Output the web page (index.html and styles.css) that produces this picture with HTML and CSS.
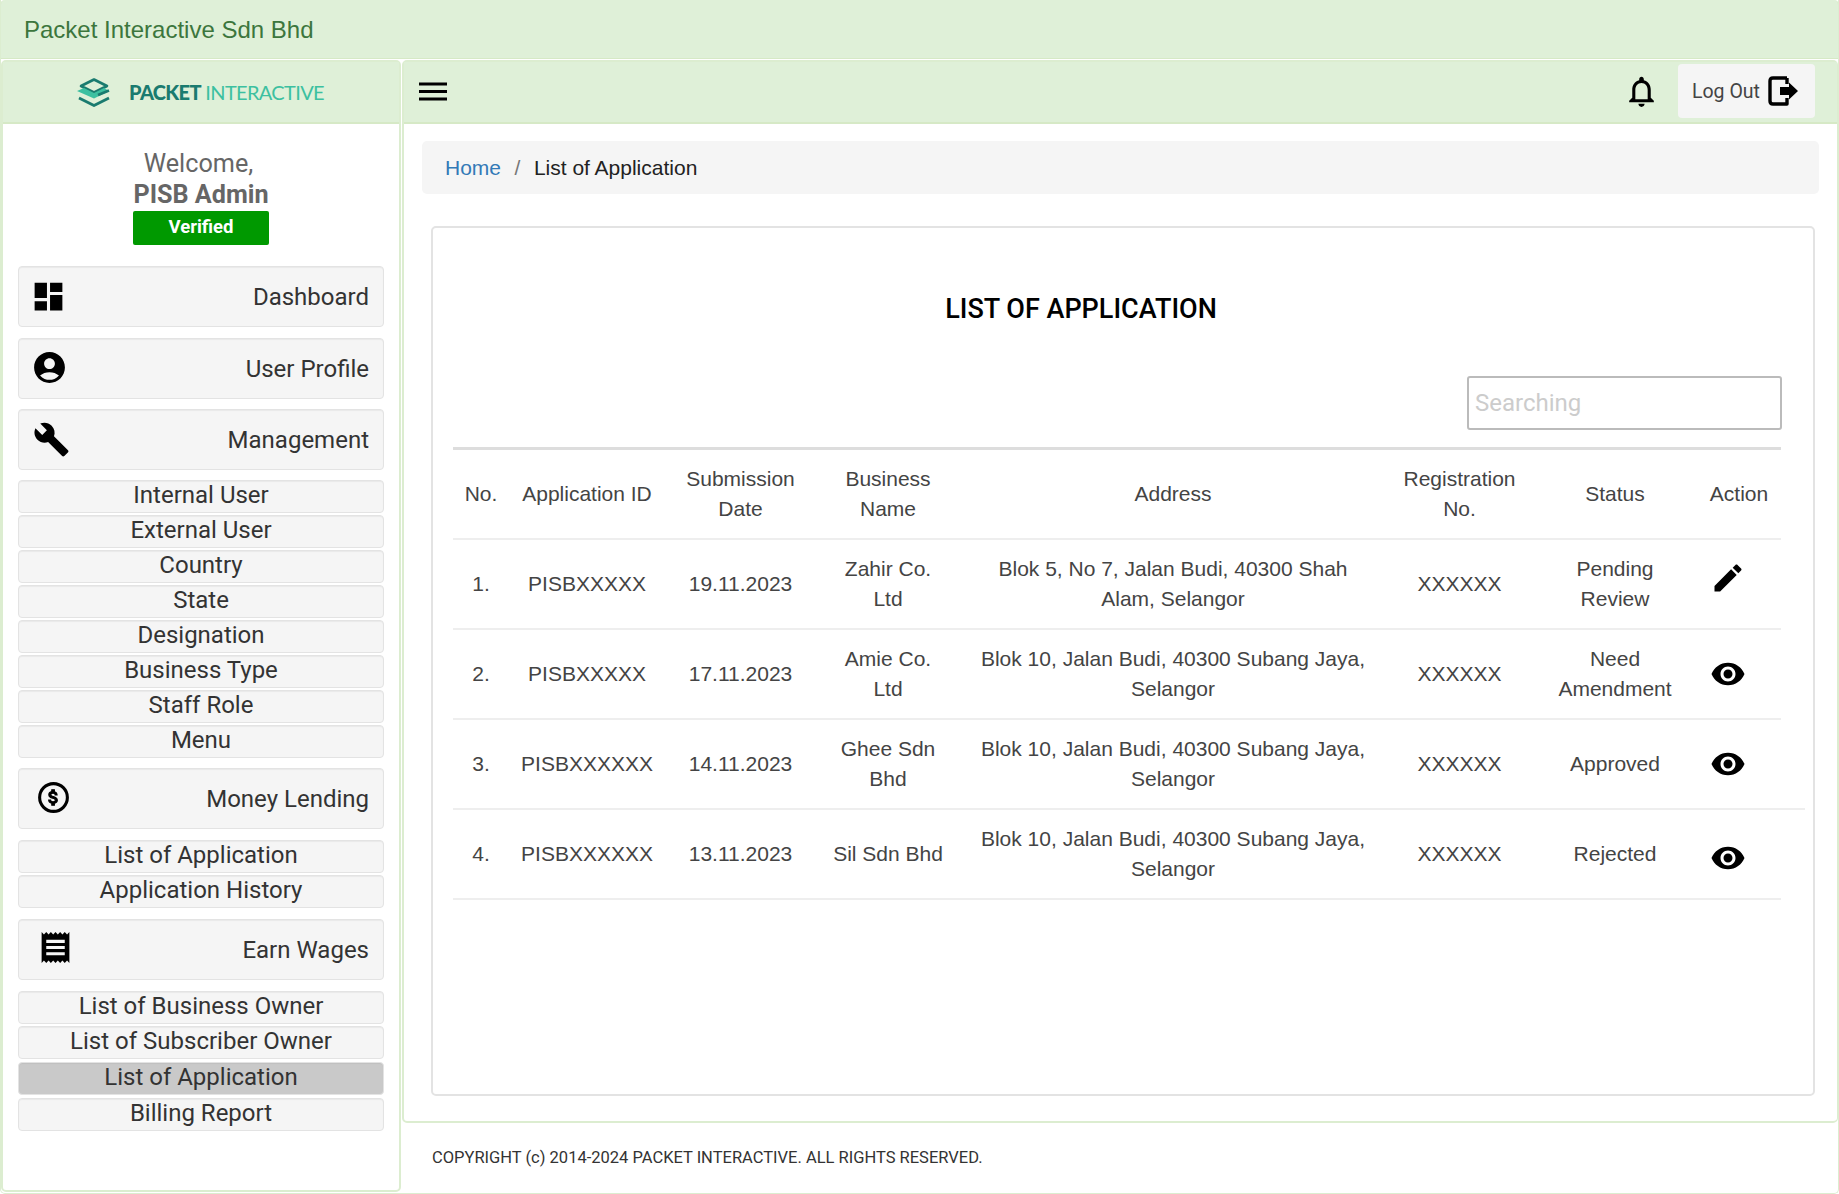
FILE: index.html
```html
<!DOCTYPE html>
<html lang="en">

<head>
  <meta charset="UTF-8">
  <meta name="viewport" content="width=device-width, initial-scale=1.0">
  <title>List of Application</title>
  <link rel="stylesheet" href="styles.css">
</head>

<body>
  <header class="topbar">Packet Interactive Sdn Bhd</header>

  <div class="layout">
    <aside class="sidebar">
      <div class="logo">
        <svg class="logo-mark" viewBox="0 0 36 29" width="36" height="29">
          <path d="M18 1.5 31 8 18 14.5 5 8Z" fill="none" stroke="#1a7b6f" stroke-width="2.6" stroke-linejoin="round"/>
          <path d="M1 13 8 10 18 15 28 10 33 13 18 20.5Z" fill="#3cc0a0"/>
          <path d="M3 20 18 27.5 33 20" fill="none" stroke="#1a7b6f" stroke-width="2.8"/>
          <path d="M22 17 33 12.5" fill="none" stroke="#1a7b6f" stroke-width="2.6"/>
        </svg>
        <span class="logo-text"><b>PACKET</b> INTERACTIVE</span>
      </div>

      <div class="welcome">
        <div class="welcome-label">Welcome,</div>
        <div class="welcome-name">PISB Admin</div>
        <div class="verified">Verified</div>
      </div>

      <nav class="menu">
        <a class="menu-btn" href="#">
          <svg class="icon-dashboard" viewBox="0 0 24 24"><path d="M3 13h8V3H3v10zm0 8h8v-6H3v6zm10 0h8V11h-8v10zm0-18v6h8V3h-8z"/></svg>
          Dashboard
        </a>
        <a class="menu-btn" href="#">
          <svg class="icon-user" viewBox="0 0 24 24"><path d="M12 2C6.48 2 2 6.48 2 12s4.48 10 10 10 10-4.48 10-10S17.52 2 12 2zm0 4c1.93 0 3.5 1.57 3.5 3.5S13.93 13 12 13s-3.5-1.57-3.5-3.5S10.07 6 12 6zm0 14c-2.03 0-4.43-.82-6.14-2.88C7.55 15.8 9.68 15 12 15s4.45.8 6.14 2.12C16.43 19.18 14.03 20 12 20z"/></svg>
          User Profile
        </a>
        <a class="menu-btn" href="#">
          <svg class="icon-wrench" viewBox="0 0 24 24"><path d="M22.7 19l-9.1-9.1c.9-2.3.4-5-1.5-6.9-2-2-5-2.4-7.4-1.3L9 6 6 9 1.6 4.7C.4 7.1.9 10.1 2.9 12.1c1.9 1.9 4.6 2.4 6.9 1.5l9.1 9.1c.4.4 1 .4 1.4 0l2.3-2.3c.5-.4.5-1.1.1-1.4z"/></svg>
          Management
        </a>
        <div class="submenu submenu-tight">
          <a href="#">Internal User</a>
          <a href="#">External User</a>
          <a href="#">Country</a>
          <a href="#">State</a>
          <a href="#">Designation</a>
          <a href="#">Business Type</a>
          <a href="#">Staff Role</a>
          <a href="#">Menu</a>
        </div>
        <a class="menu-btn" href="#">
          <svg class="icon-money" viewBox="0 0 24 24">
            <circle cx="12" cy="12" r="9" fill="none" stroke="#000" stroke-width="2"/>
            <path transform="translate(5.4 5.4) scale(.55)" d="M11.8 10.9c-2.27-.59-3-1.2-3-2.15 0-1.09 1.01-1.85 2.7-1.85 1.78 0 2.44.85 2.5 2.1h2.21c-.07-1.72-1.12-3.3-3.21-3.81V3h-3v2.16c-1.94.42-3.5 1.68-3.5 3.61 0 2.31 1.91 3.46 4.7 4.13 2.5.6 3 1.48 3 2.41 0 .69-.49 1.79-2.7 1.79-2.06 0-2.87-.92-2.98-2.1h-2.2c.12 2.19 1.76 3.42 3.68 3.83V21h3v-2.15c1.95-.37 3.5-1.5 3.5-3.55 0-2.84-2.43-3.81-4.7-4.4z" stroke="#000" stroke-width="1.4"/>
          </svg>
          Money Lending
        </a>
        <div class="submenu">
          <a href="#">List of Application</a>
          <a href="#">Application History</a>
        </div>
        <a class="menu-btn menu-earn" href="#">
          <svg class="icon-receipt" viewBox="0 0 24 24"><path d="M18 17H6v-2h12v2zm0-4H6v-2h12v2zm0-4H6V7h12v2zM3 22l1.5-1.5L6 22l1.5-1.5L9 22l1.5-1.5L12 22l1.5-1.5L15 22l1.5-1.5L18 22l1.5-1.5L21 22V2l-1.5 1.5L18 2l-1.5 1.5L15 2l-1.5 1.5L12 2l-1.5 1.5L9 2 7.5 3.5 6 2 4.5 3.5 3 2v20z"/></svg>
          Earn Wages
        </a>
        <div class="submenu">
          <a href="#">List of Business Owner</a>
          <a href="#">List of Subscriber Owner</a>
          <a class="active" href="#">List of Application</a>
          <a class="billing" href="#">Billing Report</a>
        </div>
      </nav>
    </aside>

    <div class="content">
      <main class="panel">
        <div class="panel-head">
          <svg class="burger" viewBox="0 0 28 19" width="28" height="19">
            <path d="M0 2h28M0 9.500h28M0 17h28" stroke="#000" stroke-width="3.200"/>
          </svg>
          <svg class="bell" viewBox="0 0 24 24" width="37" height="37"><path d="M12 22c1.100 0 2-.9 2-2h-4c0 1.100.9 2 2 2zm6-6v-5c0-3.070-1.630-5.640-4.500-6.320V4c0-.83-.67-1.500-1.500-1.500s-1.500.67-1.500 1.500v.68C7.640 5.360 6 7.920 6 11v5l-2 2v1h16v-1l-2-2zm-2 1H8v-6c0-2.480 1.510-4.500 4-4.500s4 2.020 4 4.500v6z"/></svg>
          <a class="logout" href="#">
            Log Out
            <svg viewBox="0 0 30 30" width="30" height="30">
              <path d="M19 2H5Q2 2 2 5V25Q2 28 5 28H19V22" fill="none" stroke="#000" stroke-width="3.400" stroke-linejoin="round"/>
              <path d="M19 2V8" stroke="#000" stroke-width="3.400"/>
              <path d="M12 11H21V6.500L30 15 21 23.500V19H12Z"/>
            </svg>
          </a>
        </div>

        <div class="panel-body">
          <div class="breadcrumb">
            <a href="#">Home</a>
            <span class="sep">/</span>
            <span>List of Application</span>
          </div>

          <section class="card">
            <h1>LIST OF APPLICATION</h1>
            <div class="search-row">
              <input type="text" placeholder="Searching">
            </div>

            <table>
              <colgroup>
                <col class="c-no">
                <col class="c-id">
                <col class="c-date">
                <col class="c-name">
                <col class="c-addr">
                <col class="c-reg">
                <col class="c-status">
                <col class="c-action">
              </colgroup>
              <thead>
                <tr>
                  <th>No.</th>
                  <th>Application ID</th>
                  <th>Submission Date</th>
                  <th>Business Name</th>
                  <th>Address</th>
                  <th>Registration No.</th>
                  <th>Status</th>
                  <th>Action</th>
                </tr>
              </thead>
              <tbody>
                <tr>
                  <td>1.</td>
                  <td>PISBXXXXX</td>
                  <td>19.11.2023</td>
                  <td>Zahir Co. Ltd</td>
                  <td>Blok 5, No 7, Jalan Budi, 40300 Shah Alam, Selangor</td>
                  <td>XXXXXX</td>
                  <td>Pending Review</td>
                  <td class="action">
                    <svg class="icon-edit" viewBox="0 0 24 24"><path d="M3 17.250V21h3.750L17.810 9.940l-3.750-3.750L3 17.250zM20.710 7.040c.39-.39.39-1.020 0-1.410l-2.340-2.340c-.39-.39-1.020-.39-1.410 0l-1.830 1.830 3.750 3.750 1.830-1.830z"/></svg>
                  </td>
                </tr>
                <tr>
                  <td>2.</td>
                  <td>PISBXXXXX</td>
                  <td>17.11.2023</td>
                  <td>Amie Co. Ltd</td>
                  <td>Blok 10, Jalan Budi, 40300 Subang Jaya, Selangor</td>
                  <td>XXXXXX</td>
                  <td>Need Amendment</td>
                  <td class="action">
                    <svg viewBox="0 0 24 24"><path d="M12 4.500C7 4.500 2.730 7.610 1 12c1.730 4.390 6 7.500 11 7.500s9.270-3.110 11-7.500c-1.730-4.390-6-7.500-11-7.500zM12 17c-2.760 0-5-2.240-5-5s2.240-5 5-5 5 2.240 5 5-2.240 5-5 5zm0-8c-1.660 0-3 1.340-3 3s1.340 3 3 3 3-1.340 3-3-1.340-3-3-3z"/></svg>
                  </td>
                </tr>
                <tr class="row-wide">
                  <td>3.</td>
                  <td>PISBXXXXXX</td>
                  <td>14.11.2023</td>
                  <td>Ghee Sdn Bhd</td>
                  <td>Blok 10, Jalan Budi, 40300 Subang Jaya, Selangor</td>
                  <td>XXXXXX</td>
                  <td>Approved</td>
                  <td class="action">
                    <svg viewBox="0 0 24 24"><path d="M12 4.500C7 4.500 2.730 7.610 1 12c1.730 4.390 6 7.500 11 7.500s9.270-3.110 11-7.500c-1.730-4.390-6-7.500-11-7.500zM12 17c-2.760 0-5-2.240-5-5s2.240-5 5-5 5 2.240 5 5-2.240 5-5 5zm0-8c-1.660 0-3 1.340-3 3s1.340 3 3 3 3-1.340 3-3-1.340-3-3-3z"/></svg>
                  </td>
                </tr>
                <tr>
                  <td>4.</td>
                  <td>PISBXXXXXX</td>
                  <td>13.11.2023</td>
                  <td>Sil Sdn Bhd</td>
                  <td>Blok 10, Jalan Budi, 40300 Subang Jaya, Selangor</td>
                  <td>XXXXXX</td>
                  <td>Rejected</td>
                  <td class="action">
                    <svg class="icon-low" viewBox="0 0 24 24"><path d="M12 4.500C7 4.500 2.730 7.610 1 12c1.730 4.390 6 7.500 11 7.500s9.270-3.110 11-7.500c-1.730-4.390-6-7.500-11-7.500zM12 17c-2.760 0-5-2.240-5-5s2.240-5 5-5 5 2.240 5 5-2.240 5-5 5zm0-8c-1.660 0-3 1.340-3 3s1.340 3 3 3 3-1.340 3-3-1.340-3-3-3z"/></svg>
                  </td>
                </tr>
              </tbody>
            </table>
          </section>
        </div>
      </main>

      <footer class="footer">COPYRIGHT (c) 2014-2024 PACKET INTERACTIVE. ALL RIGHTS RESERVED.</footer>
    </div>
  </div>
</body>

</html>
```

FILE: styles.css
```css
* {
  box-sizing: border-box;
}

body {
  margin: 0;
  height: 100vh;
  overflow: hidden;
  background-color: #fff;
  font-family: 'Roboto', sans-serif;
  color: #333;
  display: flex;
  flex-direction: column;
  border: 1px solid #dcedd0;
  border-top: 0;
  border-radius: 0 0 5px 5px;
}

a {
  text-decoration: none;
  color: inherit;
}

.topbar {
  height: 59px;
  flex: none;
  padding: 2px 23px 0;
  display: flex;
  align-items: center;
  background-color: #dff0d8;
  border: 1px solid #d6e9c6;
  border-top: 0;
  border-radius: 5px 5px 0 0;
  margin: 0 -1px;
  font-family: 'Liberation Sans', sans-serif;
  font-size: 24px;
  color: #3c763d;
}

.layout {
  flex: 1;
  display: flex;
  gap: 1px;
  padding-top: 1px;
  min-height: 0;
}

/* sidebar */
.sidebar {
  width: 400px;
  flex: none;
  border: 2px solid #dcedd0;
  border-radius: 5px;
  margin-bottom: 1px;
}

.logo {
  height: 62px;
  display: flex;
  align-items: center;
  justify-content: center;
  gap: 17px;
  padding-right: 2px;
  background-color: #dff0d8;
  border-bottom: 2px solid #d6e9c6;
}

.logo-text {
  font-family: 'Lato', sans-serif;
  font-size: 20px;
  letter-spacing: -.65px;
  color: #3cc0a0;
  white-space: nowrap;
}

.logo-text b {
  color: #1a7b6f;
  font-weight: 900;
}

.welcome {
  padding-top: 24px;
  text-align: center;
  font-size: 25.200px;
  line-height: 30px;
  color: #666;
}

.welcome-label {
  padding-right: 5px;
  line-height: 32px;
}

.welcome-name {
  font-weight: 700;
}

.verified {
  width: 136px;
  height: 34px;
  margin: 1px auto 0;
  background-color: #090;
  border-radius: 2px;
  color: #fff;
  font-size: 18.500px;
  font-weight: 700;
  line-height: 32px;
}

.menu {
  margin: 21px 15px 0 15px;
  display: flex;
  flex-direction: column;
  gap: 10.500px;
}

.menu-btn {
  height: 61px;
  padding: 1px 14px 0 0;
  display: flex;
  align-items: center;
  justify-content: space-between;
  background-color: #f5f5f5;
  border: 1px solid #e3e3e3;
  border-radius: 4px;
  font-size: 24px;
  box-shadow: inset 0 1px 1px rgba(0, 0, 0, .05);
}

.menu-earn {
  margin-top: 1px;
}

.menu-btn svg {
  width: 37px;
  height: 37px;
}

.icon-dashboard {
  margin-left: 11px;
  margin-top: -1px;
}

.icon-user {
  margin-left: 12px;
  margin-top: -2px;
}

.icon-wrench {
  margin-left: 14px;
  margin-top: -2px;
}

.icon-money {
  margin-left: 16px;
  margin-top: -3px;
}

.icon-receipt {
  margin-left: 18px;
  margin-top: -6px;
}

.submenu {
  display: flex;
  flex-direction: column;
  gap: 2px;
}

.submenu-tight {
  margin-top: -1px;
}

.submenu a {
  height: 33px;
  background-color: #f5f5f5;
  border: 1px solid #e3e3e3;
  border-radius: 4px;
  text-align: center;
  font-size: 24px;
  line-height: 29px;
  box-shadow: inset 0 1px 1px rgba(0, 0, 0, .05);
}

.submenu a.active {
  background-color: #c9c9c9;
  margin-top: 1px;
}

.submenu a.billing {
  margin-top: 1px;
}

/* main panel */
.content {
  flex: 1;
  min-width: 0;
  display: flex;
  flex-direction: column;
}

.panel {
  height: 1063px;
  flex: none;
  border: 2px solid #dcedd0;
  border-right-width: 1px;
  border-radius: 5px;
}

.panel-head {
  height: 62px;
  display: flex;
  align-items: center;
  padding: 0 22px 2px 15px;
  background-color: #dff0d8;
  border-bottom: 2px solid #d6e9c6;
}

.bell {
  margin-left: auto;
  margin-right: 18px;
}

.logout {
  width: 137px;
  height: 54px;
  padding-left: 14px;
  display: flex;
  align-items: center;
  gap: 8px;
  background-color: #f5f5f5;
  border-radius: 4px;
  font-size: 19.500px;
  color: #444;
}

.panel-body {
  padding: 17px 18px 0 18px;
}

.breadcrumb {
  height: 53px;
  padding: 0 23px;
  display: flex;
  align-items: center;
  background-color: #f5f5f5;
  border-radius: 5px;
  font-family: 'Liberation Sans', sans-serif;
  font-size: 21px;
  color: #222;
}

.breadcrumb a {
  color: #337ab7;
}

.sep {
  margin: 0 13.500px;
  color: #777;
}

.card {
  height: 870px;
  margin: 32px 4px 0 9px;
  padding: 62px 0 0 20px;
  border: 2px solid #e3e3e3;
  border-radius: 5px;
}

h1 {
  margin: 0;
  padding-right: 104px;
  text-align: center;
  font-size: 27px;
  font-weight: 500;
  line-height: 38px;
  color: #000;
}

.search-row {
  margin-top: 48px;
  width: 1329px;
  display: flex;
  justify-content: flex-end;
}

input {
  width: 315px;
  height: 54px;
  padding: 0 6px;
  border: 2px solid #bbb;
  border-radius: 3px;
  font-family: 'Roboto', sans-serif;
  font-size: 24px;
}

input::placeholder {
  color: #ccc;
}

table {
  margin-top: 17px;
  width: 1328px;
  table-layout: fixed;
  border-collapse: collapse;
  font-family: 'Liberation Sans', sans-serif;
  font-size: 21px;
  line-height: 30px;
  color: #444;
}

.c-no { width: 56px; }
.c-id { width: 156px; }
.c-date { width: 151px; }
.c-name { width: 144px; }
.c-addr { width: 426px; }
.c-reg { width: 147px; }
.c-status { width: 164px; }
.c-action { width: 84px; }

th,
td {
  padding: 0 10px;
  text-align: center;
  vertical-align: middle;
  font-weight: 400;
}

td:nth-child(4),
td:nth-child(5) {
  padding: 0 15px;
}

th {
  height: 90px;
  border-top: 3px solid #ddd;
  border-bottom: 2px solid #eee;
}

td {
  height: 90px;
  border-bottom: 2px solid #eee;
}

td.action {
  padding: 0 0 0 13px;
  text-align: left;
  position: relative;
}

td.action svg {
  display: block;
  width: 36px;
  height: 36px;
}

td.action .icon-edit {
  margin-bottom: 12px;
}

td.action .icon-low {
  margin-top: 8px;
}

/* the rule under the third row runs past the table */
.row-wide .action::after {
  content: "";
  position: absolute;
  left: 100%;
  bottom: -2px;
  width: 24px;
  height: 2px;
  background-color: #eee;
}

.footer {
  padding: 23px 0 0 30px;
  font-size: 16.500px;
  line-height: 24px;
  color: #333;
}
```
